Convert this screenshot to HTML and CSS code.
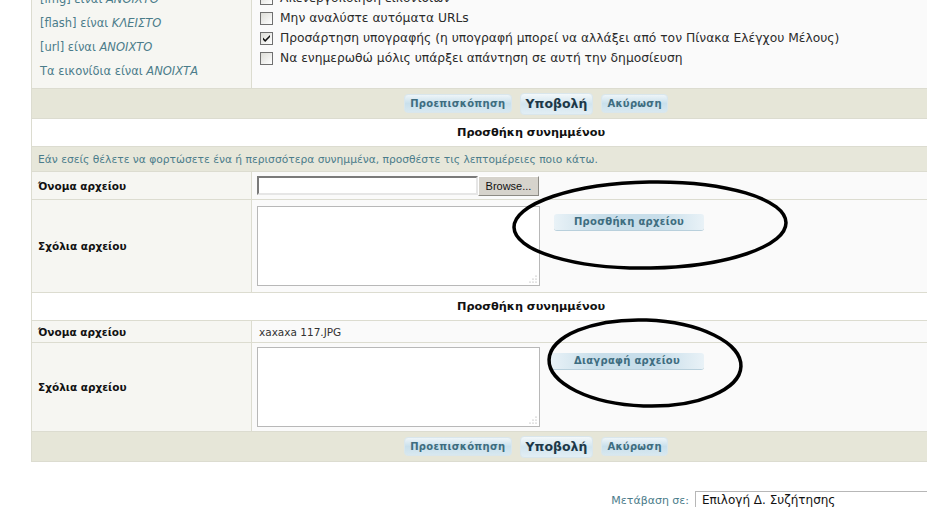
FILE: index.html
```html
<!DOCTYPE html>
<html lang="el">
<head>
    <meta charset="UTF-8">
    <title>Δημοσίευση</title>
    <link rel="stylesheet" href="styles.css">
</head>
<body>
<div class="page">
    <table class="tablebg">
        <tr class="r-opts">
            <td class="row1 status">
                <div>[img] είναι <em>ΑΝΟΙΧΤΟ</em></div>
                <div>[flash] είναι <em>ΚΛΕΙΣΤΟ</em></div>
                <div>[url] είναι <em>ΑΝΟΙΧΤΟ</em></div>
                <div>Τα εικονίδια είναι <em>ΑΝΟΙΧΤΑ</em></div>
            </td>
            <td class="row2 options">
                <label><span class="cb"></span>Απενεργοποίηση εικονιδίων</label>
                <label><span class="cb"></span>Μην αναλύστε αυτόματα URLs</label>
                <label><span class="cb"><svg viewBox="0 0 11 11"><path d="M2 4.5 L4.2 6.7 L9 1.9 L9 4.1 L4.2 8.9 L2 6.7 Z"/></svg></span>Προσάρτηση υπογραφής (η υπογραφή μπορεί να αλλάξει από τον Πίνακα Ελέγχου Μέλους)</label>
                <label><span class="cb"></span>Να ενημερωθώ μόλις υπάρξει απάντηση σε αυτή την δημοσίευση</label>
            </td>
        </tr>
        <tr class="r-bar">
            <td class="cat" colspan="2">
                <span class="btn">Προεπισκόπηση</span>
                <span class="btn main">Υποβολή</span>
                <span class="btn">Ακύρωση</span>
            </td>
        </tr>
        <tr class="r-head">
            <th colspan="2">Προσθήκη συνημμένου</th>
        </tr>
        <tr class="r-info">
            <td class="row3" colspan="2">Εάν εσείς θέλετε να φορτώσετε ένα ή περισσότερα συνημμένα, προσθέστε τις λεπτομέρειες ποιο κάτω.</td>
        </tr>
        <tr class="r-name">
            <td class="row1 label">Όνομα αρχείου</td>
            <td class="row2">
                <div class="file"><span class="file-box"></span><span class="browse">Browse...</span></div>
            </td>
        </tr>
        <tr class="r-comment">
            <td class="row1 label">Σχόλια αρχείου</td>
            <td class="row2">
                <div class="attach">
                    <div class="ta-wrap">
                        <textarea class="post"></textarea>
                        <svg class="grip" width="8" height="8" viewBox="0 0 8 8"><circle cx="7" cy="1" r=".6"/><circle cx="4" cy="4" r=".6"/><circle cx="7" cy="4" r=".6"/><circle cx="1" cy="7" r=".6"/><circle cx="4" cy="7" r=".6"/><circle cx="7" cy="7" r=".6"/></svg>
                    </div>
                    <span class="btn wide add">Προσθήκη αρχείου</span>
                </div>
            </td>
        </tr>
        <tr class="r-head">
            <th colspan="2">Προσθήκη συνημμένου</th>
        </tr>
        <tr class="r-small">
            <td class="row1 label">Όνομα αρχείου</td>
            <td class="row2 fname">xaxaxa 117.JPG</td>
        </tr>
        <tr class="r-comment2">
            <td class="row1 label">Σχόλια αρχείου</td>
            <td class="row2">
                <div class="attach">
                    <div class="ta-wrap">
                        <textarea class="post"></textarea>
                        <svg class="grip" width="8" height="8" viewBox="0 0 8 8"><circle cx="7" cy="1" r=".6"/><circle cx="4" cy="4" r=".6"/><circle cx="7" cy="4" r=".6"/><circle cx="1" cy="7" r=".6"/><circle cx="4" cy="7" r=".6"/><circle cx="7" cy="7" r=".6"/></svg>
                    </div>
                    <span class="btn wide del">Διαγραφή αρχείου</span>
                </div>
            </td>
        </tr>
        <tr class="r-bar">
            <td class="cat" colspan="2">
                <span class="btn">Προεπισκόπηση</span>
                <span class="btn main">Υποβολή</span>
                <span class="btn">Ακύρωση</span>
            </td>
        </tr>
    </table>

    <div class="jump">
        <span class="jump-label">Μετάβαση σε:</span>
        <span class="jump-select">Επιλογή Δ. Συζήτησης</span>
    </div>

    <!-- σημάδια με το χέρι πάνω στο screenshot -->
    <svg class="marks" width="1000" height="527" viewBox="0 0 1000 527">
        <ellipse cx="619" cy="245" rx="136" ry="43" transform="rotate(-1 619 245)"/>
        <ellipse cx="614" cy="383" rx="96" ry="43" transform="rotate(2 614 383)"/>
    </svg>
</div>
</body>
</html>
```

FILE: styles.css
```css
* {
    margin: 0;
    padding: 0;
}

html, body {
    overflow: hidden;
}

body {
    background-color: #fff;
    font-family: "DejaVu Sans", Verdana, sans-serif;
    font-size: 10px;
    color: #222;
}

.page {
    position: relative;
    width: 1000px;
    margin: -20px 0 0 31px;
}

.tablebg {
    width: 1000px;
    border-collapse: collapse;
    border: 1px solid #d6d6c9;
}

.tablebg td, .tablebg th {
    border: 1px solid #dcdcd0;
    vertical-align: middle;
}

.row1 {
    width: 213px;
    padding-left: 6px;
    background-color: #f6f6f2;
}

.row2 {
    padding-left: 5px;
    background-color: #fafafa;
}

.row3 {
    padding-left: 6px;
    background-color: #e7e7da;
    color: #4b7c8a;
    font-size: 10.7px;
}

.cat {
    background-color: #e6e6d8;
    text-align: center;
    font-size: 0;
    padding-left: 10px;
}

.tablebg th {
    background-color: #fff;
    font-size: 11.3px;
    font-weight: bold;
    color: #111;
    text-align: center;
}

/* ύψη γραμμών */
.r-opts td {
    height: 100px;
    vertical-align: top;
}

.r-bar td {
    height: 29px;
}

.r-head th {
    height: 27px;
}

.r-info td {
    height: 24px;
}

.r-name td {
    height: 27px;
}

.r-comment td {
    height: 92px;
}

.r-small td {
    height: 21px;
}

.r-comment2 td {
    height: 88px;
}

.status {
    padding-top: 6px;
    color: #4b7c8a;
    font-size: 11.5px;
}

.status div {
    line-height: 24px;
    padding-left: 2px;
}

.status em {
    font-style: italic;
}

.options {
    padding-top: 7px;
    font-size: 12.3px;
    color: #2b2b2b;
}

.options label {
    display: flex;
    align-items: center;
    height: 20px;
    padding-left: 3px;
}

.cb {
    width: 11px;
    height: 11px;
    border: 1px solid #707070;
    background: linear-gradient(135deg, #dcdcd7, #fff);
    margin-right: 7px;
    display: inline-block;
}

.cb svg {
    width: 11px;
    height: 11px;
    display: block;
}

.cb svg path {
    fill: #111;
}

.label {
    font-weight: bold;
    color: #111;
    font-size: 10.5px;
}

.btn {
    display: inline-block;
    vertical-align: middle;
    height: 17px;
    line-height: 17px;
    padding: 0 5px;
    margin: 0 4px;
    border-radius: 4px;
    border: 1px solid #d9e6ec;
    background: linear-gradient(#eef5f8, #c9e0ec 50%, #d8e8f0);
    color: #3e6d80;
    font-size: 10px;
    font-weight: bold;
    letter-spacing: 0.3px;
}

.btn.main {
    height: 20px;
    line-height: 20px;
    font-size: 12.5px;
    color: #1d3848;
    letter-spacing: 0;
    background: linear-gradient(#f3f8fa, #d2e5ef 50%, #e2eef4);
}

.btn.wide {
    height: 16px;
    line-height: 16px;
    width: 150px;
    padding: 0;
    text-align: center;
    border: none;
    border-radius: 3px;
    background: linear-gradient(90deg, #e9f2f7, #c8deea 30%, #c8deea 70%, #e9f2f7);
    box-shadow: 0 1px 0 #b9d0dc;
}

.btn.add {
    margin: 8px 0 0 14px;
}

.btn.del {
    width: 154px;
    margin: 6px 0 0 10px;
}

.file {
    display: flex;
    align-items: center;
}

.file-box {
    width: 217px;
    height: 15px;
    border: 2px solid #7a7a7a;
    border-right-color: #e6e6e6;
    border-bottom-color: #e6e6e6;
    background-color: #fff;
}

.browse {
    width: 59px;
    height: 18px;
    line-height: 18px;
    text-align: center;
    border: 1px solid #8c8a84;
    border-top-color: #fff;
    border-left-color: #fff;
    background-color: #d6d3cc;
    font-family: "Liberation Sans", Arial, sans-serif;
    font-size: 11px;
    color: #111;
}

.attach {
    display: flex;
    align-items: flex-start;
}

.ta-wrap {
    position: relative;
}

.post {
    width: 281px;
    height: 78px;
    border: 1px solid #b8b8b8;
    background-color: #fff;
    display: block;
    resize: none;
}

.grip {
    position: absolute;
    right: 3px;
    bottom: 3px;
    fill: #9a9a9a;
}

.fname {
    color: #333;
    padding-left: 7px;
    font-size: 10.5px;
}

.jump {
    display: flex;
    justify-content: flex-end;
    align-items: flex-start;
    margin-top: 29px;
    font-size: 11px;
}

.jump-label {
    color: #4b7c8a;
    padding-top: 3px;
    margin-right: 6px;
}

.jump-select {
    width: 328px;
    height: 20px;
    border: 1px solid #b7b7b7;
    padding-left: 6px;
    padding-top: 1px;
    font-size: 12px;
    color: #111;
}

.marks {
    position: absolute;
    left: 0;
    top: 0;
    pointer-events: none;
}

.marks ellipse {
    fill: none;
    stroke: #000;
    stroke-width: 3.5;
}
```
